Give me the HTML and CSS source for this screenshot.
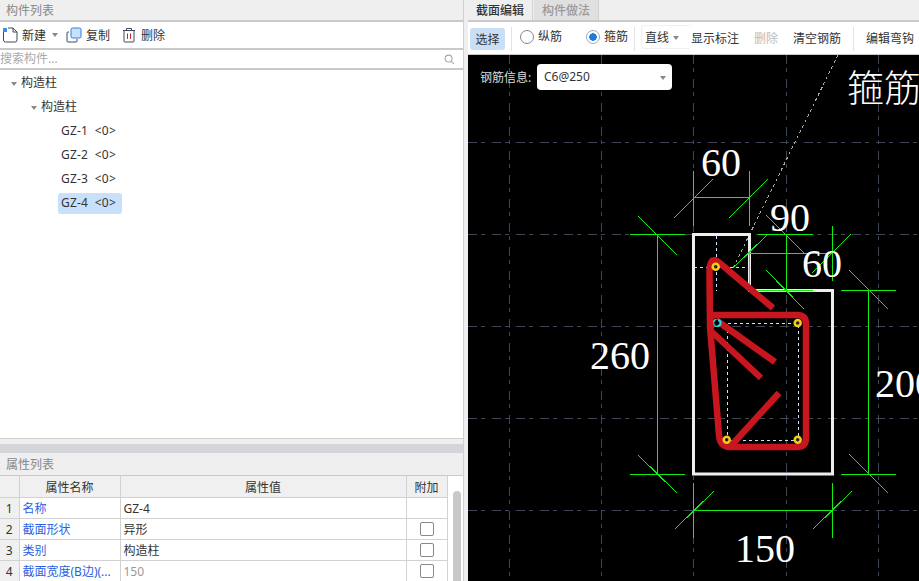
FILE: index.html
```html
<!DOCTYPE html>
<html lang="zh">
<head>
<meta charset="utf-8">
<title>构件列表</title>
<link rel="stylesheet" href="styles.css">
</head>
<body>
<div class="app">
  <aside class="left">
    <section class="list-panel">
      <h2 class="panel-title">构件列表</h2>
      <div class="list-toolbar">
        <button class="tool tool-new">
          <svg class="ico" viewBox="0 0 16 16" width="16" height="16"><path d="M1.500 4.500V13a2 2 0 0 0 2 2h9.500a2 2 0 0 0 2-2V5L11 1H6" fill="none" stroke="#3a4a5c" stroke-width="1"/><path d="M11 1v4h4" fill="none" stroke="#3a4a5c"/><rect x="1" y="1" width="4" height="4" fill="#3d8df0"/></svg>
          <span>新建</span><i class="caret"></i>
        </button>
        <button class="tool tool-copy">
          <svg class="ico" viewBox="0 0 16 16" width="16" height="16"><path d="M3 5H2a1 1 0 0 0-1 1v8a1 1 0 0 0 1 1h8a1 1 0 0 0 1-1v-2" fill="none" stroke="#3a4a5c"/><rect x="5" y="1" width="10" height="10" rx="1.500" fill="#c9e0fb" stroke="#2f7fe0"/></svg>
          <span>复制</span>
        </button>
        <button class="tool tool-del">
          <svg class="ico" viewBox="0 0 14 16" width="14" height="16"><path d="M1 3.500h12M4.500 3.500V1.500h5v2M2 3.500V14a1 1 0 0 0 1 1h8a1 1 0 0 0 1-1V3.500" fill="none" stroke="#3a4a5c"/><path d="M5.500 6.500v5.500M8.500 6.500v5.500" stroke="#d0202a"/></svg>
          <span>删除</span>
        </button>
      </div>
      <div class="search">
        <span class="search-ph">搜索构件...</span>
        <svg class="search-ico" viewBox="0 0 12 12" width="11" height="11"><circle cx="5" cy="5" r="3.800" fill="none" stroke="#aaa" stroke-width="1.200"/><path d="M8 8l3 3" stroke="#aaa" stroke-width="1.200"/></svg>
      </div>
      <ul class="tree">
        <li class="node lvl1"><i class="caret"></i><span>构造柱</span></li>
        <li class="node lvl2"><i class="caret"></i><span>构造柱</span></li>
        <li class="node lvl3"><span class="leaf">GZ-1 &nbsp;&lt;0&gt;</span></li>
        <li class="node lvl3"><span class="leaf">GZ-2 &nbsp;&lt;0&gt;</span></li>
        <li class="node lvl3"><span class="leaf">GZ-3 &nbsp;&lt;0&gt;</span></li>
        <li class="node lvl3"><span class="leaf selected">GZ-4 &nbsp;&lt;0&gt;</span></li>
      </ul>
    </section>
    <div class="splitter"></div>
    <section class="prop-panel">
      <h2 class="panel-title prop-title">属性列表</h2>
      <div class="prop-body">
        <table class="props">
          <colgroup><col class="c-num"><col class="c-name"><col class="c-val"><col class="c-add"></colgroup>
          <thead><tr><th></th><th>属性名称</th><th>属性值</th><th>附加</th></tr></thead>
          <tbody>
            <tr><td class="num">1</td><td class="name">名称</td><td>GZ-4</td><td></td></tr>
            <tr><td class="num">2</td><td class="name">截面形状</td><td>异形</td><td class="chk"><i class="box"></i></td></tr>
            <tr><td class="num">3</td><td class="name">类别</td><td>构造柱</td><td class="chk"><i class="box"></i></td></tr>
            <tr><td class="num">4</td><td class="name">截面宽度(B边)(...</td><td class="muted">150</td><td class="chk"><i class="box"></i></td></tr>
          </tbody>
        </table>
        <div class="scrollbar"><div class="thumb"></div></div>
      </div>
    </section>
  </aside>

  <main class="right">
    <div class="tabs">
      <div class="tab active">截面编辑</div>
      <div class="tab">构件做法</div>
    </div>
    <div class="edit-toolbar">
      <span class="btn btn-on">选择</span>
      <i class="sep"></i>
      <label class="radio"><i class="dot"></i><span>纵筋</span></label>
      <label class="radio radio-on"><i class="dot"></i><span>箍筋</span></label>
      <i class="sep sep-b"></i>
      <span class="line-select">直线<i class="caret"></i></span>
      <span class="btn b1">显示标注</span>
      <span class="btn b2 disabled">删除</span>
      <span class="btn b2">清空钢筋</span>
      <i class="sep sep-c"></i>
      <span class="btn">编辑弯钩</span>
    </div>
    <div class="canvas">
      <svg class="drawing" width="451" height="526" viewBox="468 55 451 526">
        <g class="grid">
          <path d="M468 142.500H919M468 234.500H919M468 326.500H919M468 418.500H919M468 510.500H919"/>
          <path d="M509.500 55V581M601.500 55V581M693.500 55V581M786.500 55V581M878.500 55V581"/>
        </g>
        <path class="leader" d="M838 55L733 268"/>
        <path class="outline" d="M693.500 234.500H749.500V290.500H832.500V474H693.500Z"/>
        <g class="green">
          <path d="M693.500 171V226M749.500 171V226M693 197.500H749M674 218L713 179M729 218L768 179"/>
          <path d="M630 234.500H685M630 474.500H685M657.500 234V474M638 216L677 255M638 455L677 493"/>
          <path d="M758 234.500H813M758 290.500H813M786.500 234V290M766 215L804 253M766 270L804 309"/>
          <path d="M749.500 253V288M749 253.500H832M832.500 226V281M733 268L767 235M812 273L851 234"/>
          <path d="M841 290.500H896M841 474.500H896M868.500 290V474M849 270L888 309M849 454L888 493"/>
          <path d="M693 510.500H832M693.500 483V538M832.500 483V538M675 529L714 491M813 529L852 491"/>
        </g>
        <g class="dash">
          <path d="M716.500 236V291M694 267.500H749"/>
          <path d="M716 323.500H798.500V440.500H727.500V323.500"/>
        </g>
        <circle class="pt-cyan" cx="716.500" cy="323" r="3"/>
        <g class="rebar">
          <path d="M773 308L722 265Q716 259 712.500 260.500Q709.500 263 709.500 272L710 327L719 435Q720 447 730 447H797Q806 447 806 438V324Q806 315 797 315H716Q710 315 710 321Q710 328 714 329"/>
          <path d="M716 320L775 362M712 332L761 378M730 447L779 393"/>
        </g>
        <circle class="pt-cyan-top" cx="717.500" cy="323" r="3"/>
        <g class="pts">
          <circle cx="715.700" cy="266.700" r="3"/>
          <circle cx="797.700" cy="323" r="3"/>
          <circle cx="726.700" cy="439.700" r="3"/>
          <circle cx="797.700" cy="439.700" r="3"/>
        </g>
        <g class="dims">
          <text x="701" y="176">60</text>
          <text x="770" y="231">90</text>
          <text x="802" y="277">60</text>
          <text x="590" y="369">260</text>
          <text x="875" y="397">200</text>
          <text x="735" y="562">150</text>
        </g>
        <text class="cjk-big" x="847" y="52">箍筋</text>
        <text class="cjk-big" x="847" y="102">箍筋</text>
      </svg>
      <div class="rebar-info">
        <span class="info-label">钢筋信息:</span>
        <span class="info-select">C6@250<i class="caret"></i></span>
      </div>
    </div>
  </main>
</div>
</body>
</html>
```

FILE: styles.css
```css
* { box-sizing: border-box; }
html, body { margin: 0; padding: 0; height: 581px; overflow: hidden; }
body {
  font: 12px/1.2 "Noto Sans", "Noto Sans CJK SC", sans-serif;
  color: #333;
  background: #efefef;
}
.app { display: flex; height: 581px; }
.caret {
  display: inline-block;
  width: 0; height: 0;
  border: 3px solid transparent;
  border-top: 4px solid #888;
  border-bottom: 0;
}

/* left */
.left { width: 464px; flex: none; display: flex; flex-direction: column; margin-right: 4px; }
.list-panel { height: 439px; flex: none; display: flex; flex-direction: column; background: #fff; border-right: 1px solid #d0d0d0; border-bottom: 1px solid #d0d0d0; }
.panel-title { margin: 0; height: 20px; padding: 1px 0 0 6px; font-size: 12px; font-weight: 400; line-height: 19px; color: #888; background: #efefef; }
.list-toolbar { height: 30px; flex: none; display: flex; align-items: center; border-top: 2px solid #c9c9c9; border-bottom: 2px solid #c9c9c9; padding-left: 2px; }
.tool { display: flex; align-items: center; padding: 0; border: 0; background: none; font: inherit; color: #333; }
.tool span { padding-top: 3px; }
.tool .ico { margin-right: 4px; }
.tool-new .caret { margin-left: 6px; }
.tool-new { margin-right: 8px; }
.tool-copy { margin-right: 12px; }
.tool-del .ico { margin-right: 5px; }
.search { height: 20px; flex: none; display: flex; align-items: center; justify-content: space-between; padding: 1px 8px 0 0; border-bottom: 2px solid #c9c9c9; color: #aaa; }
.tree { list-style: none; margin: 0; padding: 1px 0 0; }
.node { height: 24px; display: flex; align-items: center; }
.lvl1 { padding: 1px 0 0 11px; }
.lvl2 { padding: 1px 0 0 31px; }
.lvl3 { padding-left: 58px; }
.node .caret { margin-right: 4px; }
.leaf { display: block; width: 64px; padding: 0 3px 2px; line-height: 19px; height: 21px; border-radius: 3px; letter-spacing: .2px; white-space: nowrap; }
.selected { background: #c9e0fa; }
.splitter { height: 14px; flex: none; background: linear-gradient(#efefef 0 5px, #d4d5d9 5px); border-right: 1px solid #d0d0d0; }

.prop-panel { flex: 1; min-height: 0; display: flex; flex-direction: column; border-right: 1px solid #d0d0d0; background: #fff; }
.prop-title { height: 23px; padding-top: 2px; line-height: 20px; flex: none; border-bottom: 1px solid #c9c9c9; }
.prop-body { flex: 1; display: flex; min-height: 0; overflow: hidden; }
.props { width: 447px; flex: none; table-layout: fixed; border-collapse: collapse; align-self: flex-start; }
.c-num { width: 19px; } .c-name { width: 101px; } .c-val { width: 286px; } .c-add { width: 41px; }
.props th, .props td { height: 21px; padding: 2px 3px 0; border: 1px solid #d2d2d2; line-height: 17px; white-space: nowrap; overflow: hidden; font-weight: 400; }
.props th { background: #f0f0f0; text-align: center; }
.props tr > :first-child { border-left: 0; }
.props thead th { border-top: 0; }
.props .num { background: #f0f0f0; text-align: center; padding: 2px 0 0; }
.props .name { color: #2b5fe0; }
.props .muted { color: #999; }
.props .chk { text-align: center; padding: 0 3px; }
.box { display: block; width: 14px; height: 14px; margin: 0 auto; border: 1px solid #888; border-radius: 2px; background: #fff; }
.scrollbar { flex: 1; padding: 15px 3px 0 5px; background: #fff; }
.thumb { width: 8px; height: 100%; border-radius: 4px 4px 0 0; background: #c8c8c8; }

/* right */
.right { flex: 1; min-width: 0; display: flex; flex-direction: column; }
.tabs { height: 20px; flex: none; display: flex; background: #efefef; }
.tab { width: 65px; margin-right: 1px; padding-top: 1px; text-align: center; line-height: 19px; font-weight: 500; color: #999; background: #e0e0e0; border-right: 1px solid #d0d0d0; }
.tab.active { color: #333; background: #efefef; }
.edit-toolbar { height: 35px; flex: none; display: flex; align-items: center; padding: 1px 0 0 2px; background: #fff; border-top: 2px solid #c9c9c9; border-bottom: 1px solid #c9c9c9; white-space: nowrap; overflow: hidden; }
.btn { display: block; line-height: 22px; padding-top: 1px; }
.btn-on { width: 35px; height: 22px; line-height: 21px; text-align: center; background: #c9dff6; border-radius: 3px; }
.b1 { margin-right: 15px; }
.b2 { margin-right: 15px; }
.disabled { color: #bbb; }
.sep { display: block; width: 1px; height: 24px; margin: 0 8px 0 6px; background: #e2e2e2; flex: none; }
.sep-b { margin: 0 6px 0 6px; }
.sep-c { margin: 0 12px 0 -3px; }
.radio { display: flex; align-items: center; width: 66px; margin-top: -2px; }
.radio-on { width: 42px; }
.dot { width: 14px; height: 14px; margin-right: 4px; border: 1px solid #888; border-radius: 50%; background: #fff; flex: none; }
.radio-on .dot { border-color: #9ab; background: radial-gradient(circle, #1f7ae0 0 3.500px, #fff 4px); }
.line-select { display: flex; align-items: center; width: 50px; height: 24px; padding: 2px 0 0 3px; border: 1px solid #f0f0f0; border-right: 0; border-radius: 3px; margin-top: -3px; line-height: 22px; }
.line-select .caret { margin-left: 4px; }

.canvas { position: relative; flex: 1; min-height: 0; background: #000; overflow: hidden; }
.drawing { display: block; }
.grid path { fill: none; stroke: #3f4654; stroke-width: 1; stroke-dasharray: 9 4 4 7; }
.leader { fill: none; stroke: #aaa; stroke-width: 1; stroke-dasharray: 3 3; shape-rendering: crispEdges; }
.outline { fill: none; stroke: #eee; stroke-width: 3; }
.green path { fill: none; stroke: #10f010; stroke-width: 1; shape-rendering: crispEdges; }
.dash path { fill: none; stroke: #cfe4ff; stroke-width: 1; stroke-dasharray: 3 3; shape-rendering: crispEdges; }
.pt-cyan { fill: #000; stroke: #20e0e8; stroke-width: 2; }
.pt-cyan-top { fill: #000; stroke: #20e0e8; stroke-width: 2; stroke-dasharray: 9.500 9.500; stroke-dashoffset: 4.700; }
.rebar path { fill: none; stroke: #c8161f; stroke-width: 6.500; stroke-linejoin: round; }
.pts circle { fill: #222; stroke: #f5cc1a; stroke-width: 2.500; }
.dims text { font: 40px "Liberation Serif", serif; fill: #fff; }
.cjk-big { font: 300 37px "Noto Sans CJK SC", serif; fill: #fff; }
.rebar-info { position: absolute; left: 12px; top: 9px; display: flex; align-items: center; }
.info-label { width: 57px; padding-top: 2px; color: #ddd; }
.info-select { position: relative; display: block; width: 135px; height: 26px; padding-left: 7px; line-height: 26px; background: #fff; border-radius: 4px; }
.info-select .caret { position: absolute; right: 6px; top: 12px; }
```
